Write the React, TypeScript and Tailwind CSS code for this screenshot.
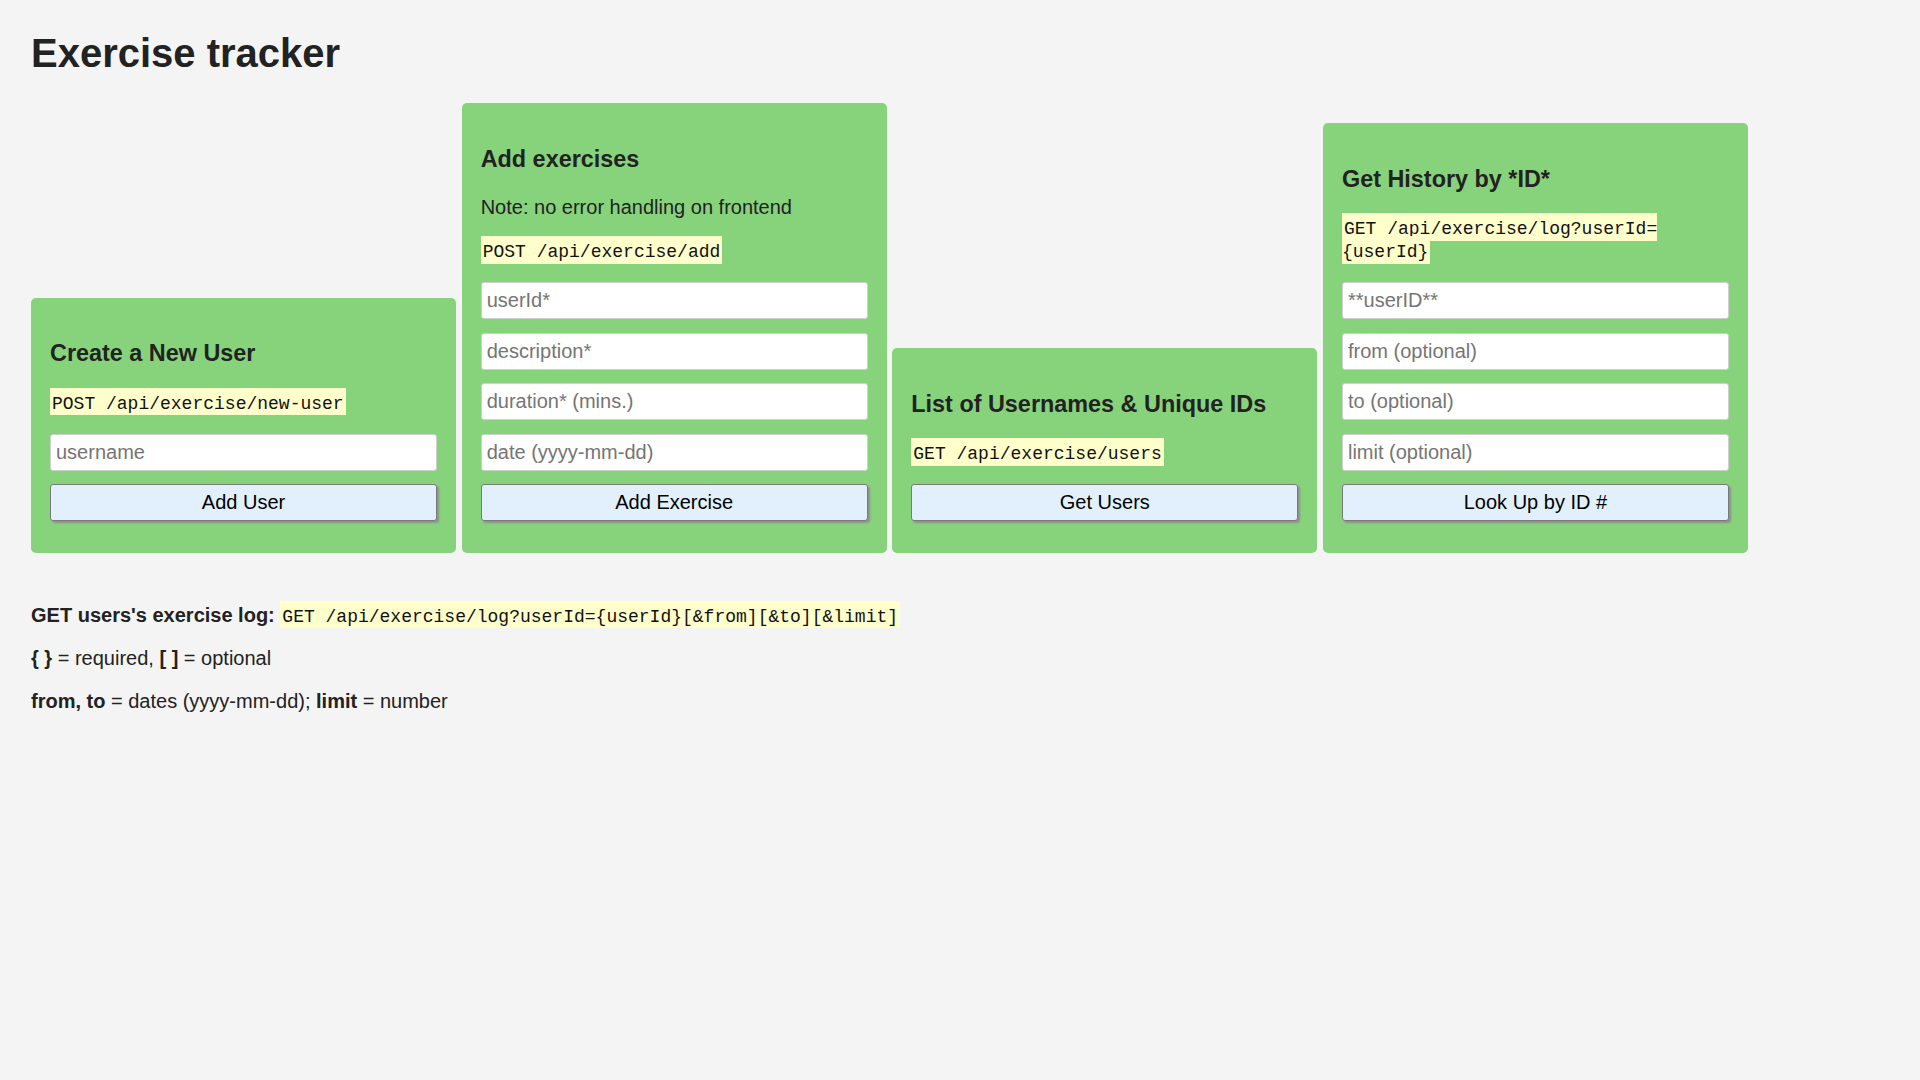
import React from "react";

const codeCls =
  "bg-[#ffffcc] px-[2px] pt-[6px] pb-[1.5px] font-['Liberation_Mono',monospace] text-[18px] leading-none text-[#111]";

function Field({ placeholder }: { placeholder: string }) {
  return (
    <input
      type="text"
      placeholder={placeholder}
      className="mb-[13.5px] block h-[37px] w-full rounded-[3px] border border-[#cfcfcf] bg-white px-[5px] text-[20px] text-[#222] outline-none placeholder:text-[#757575]"
    />
  );
}

function Btn({ label }: { label: string }) {
  return (
    <button
      type="button"
      className="mb-[12.7px] block h-[37px] w-full rounded-[3px] border border-[#7a7a7a] bg-[#e2f0fe] text-[20px] text-black shadow-[2px_2px_2px_#8f8f8f]"
    >
      {label}
    </button>
  );
}

function Card({ title, children }: { title: string; children: React.ReactNode }) {
  return (
    <div className="w-[425px] rounded-[5px] bg-[#87d37c] px-[19px] pt-[42.9px] pb-[19px]">
      <h3 className="mb-[23.4px] text-[23.4px] font-bold leading-[27px]">{title}</h3>
      {children}
    </div>
  );
}

export default function App() {
  return (
    <div className="min-h-screen bg-[#f4f4f4] px-[31px] pt-[30px] font-['Liberation_Sans',Arial,sans-serif] text-[20px] leading-[23px] text-[#222]">
      <h1 className="text-[40px] font-bold leading-[46px]">Exercise tracker</h1>

      <div className="mt-[27px] flex items-end gap-[5.67px]">
        {/* create user */}
        <Card title="Create a New User">
          <p className="mb-[20px]">
            <code className={codeCls}>POST /api/exercise/new-user</code>
          </p>
          <Field placeholder="username" />
          <Btn label="Add User" />
        </Card>

        {/* add exercise */}
        <Card title="Add exercises">
          <p className="mb-[20px]">Note: no error handling on frontend</p>
          <p className="mb-[20px]">
            <code className={codeCls}>POST /api/exercise/add</code>
          </p>
          <Field placeholder="userId*" />
          <Field placeholder="description*" />
          <Field placeholder="duration* (mins.)" />
          <Field placeholder="date (yyyy-mm-dd)" />
          <Btn label="Add Exercise" />
        </Card>

        {/* users list */}
        <Card title="List of Usernames & Unique IDs">
          <p className="mb-[20px]">
            <code className={codeCls}>GET /api/exercise/users</code>
          </p>
          <Btn label="Get Users" />
        </Card>

        {/* history */}
        <Card title="Get History by *ID*">
          <p className="mb-[20px]">
            <code className={codeCls}>
              GET /api/exercise/log?userId=
              <br />
              {"{userId}"}
            </code>
          </p>
          <Field placeholder="**userID**" />
          <Field placeholder="from (optional)" />
          <Field placeholder="to (optional)" />
          <Field placeholder="limit (optional)" />
          <Btn label="Look Up by ID #" />
        </Card>
      </div>

      <div className="mt-[51px] flex flex-col gap-[20px]">
        <p>
          <b>GET users's exercise log:</b>{" "}
          <code className={codeCls}>GET /api/exercise/log?userId={"{userId}"}[&amp;from][&amp;to][&amp;limit]</code>
        </p>
        <p>
          <b>{"{ }"}</b> = required, <b>[ ]</b> = optional
        </p>
        <p>
          <b>from, to</b> = dates (yyyy-mm-dd); <b>limit</b> = number
        </p>
      </div>
    </div>
  );
}
